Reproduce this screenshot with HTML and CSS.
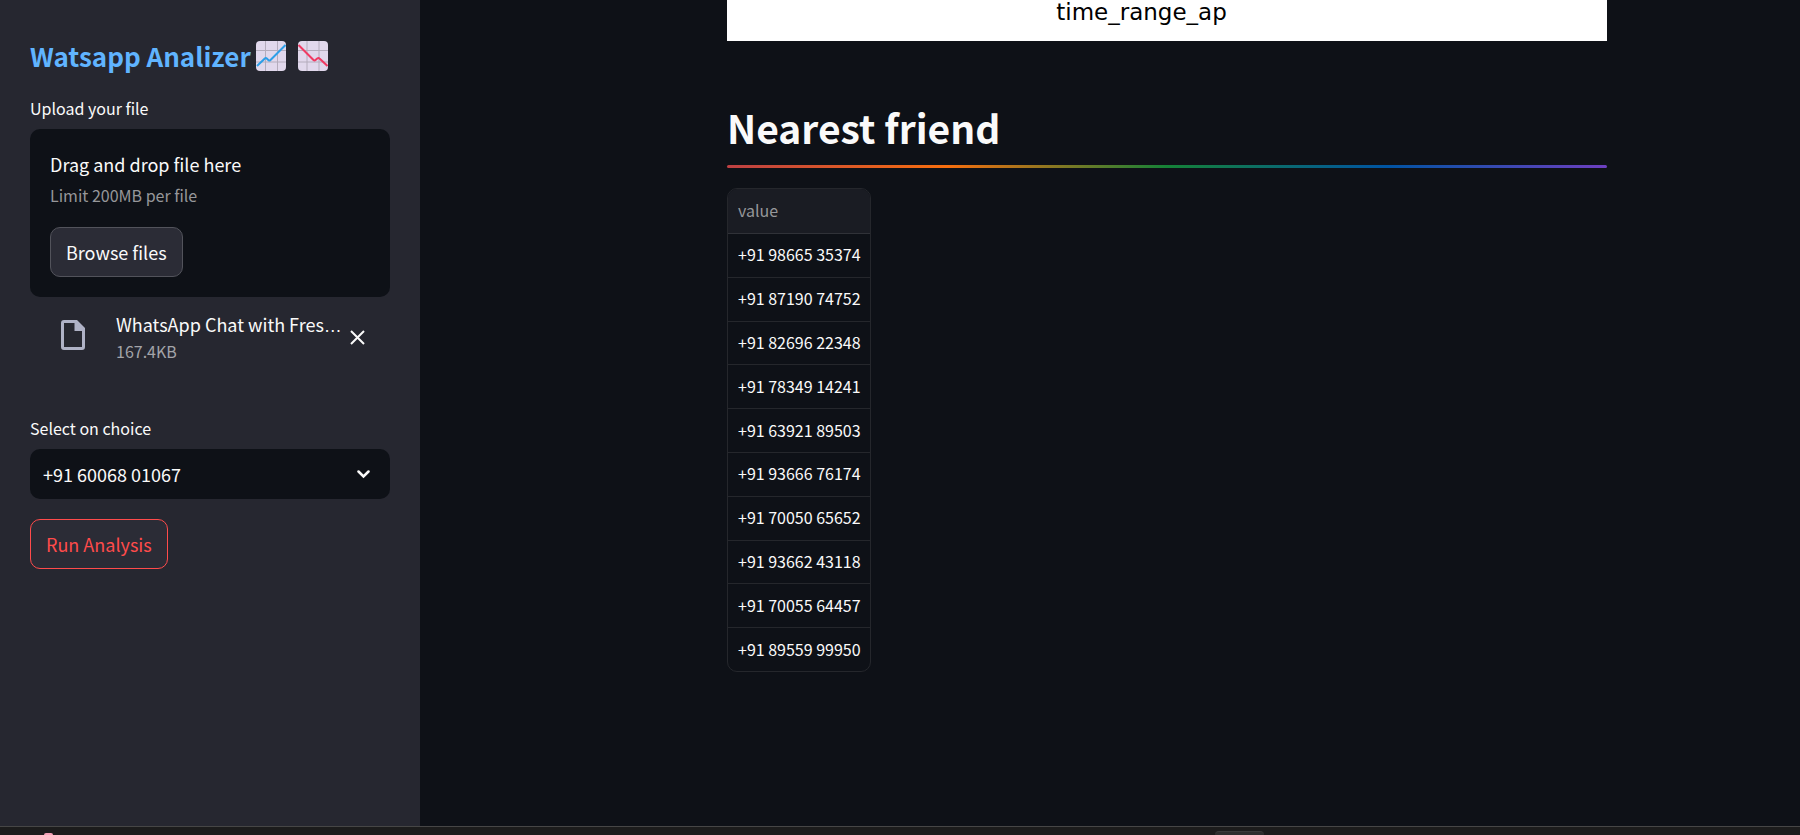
FILE: index.html
```html
<!DOCTYPE html>
<html lang="en">
<head>
<meta charset="utf-8">
<title>Watsapp Analizer</title>
<link rel="stylesheet" href="styles.css">
</head>
<body>
<div class="app">
  <aside class="sidebar">
    <h1 class="brand">
      <span>Watsapp Analizer</span>
      <svg class="emoji" viewBox="0 0 30 30" aria-hidden="true">
        <rect width="30" height="30" rx="4" fill="#e1d8ec"/>
        <path d="M9.5 0V30M21.5 0V30M0 9.5H30M0 21H30" stroke="#b4acbc" stroke-width="1" fill="none"/>
        <path d="M1 25L8.800 17.500Q9.800 16.500 10.800 17.500L12.500 19.300Q13.500 20 14.500 19L29.500 4" stroke="#2d9fe8" stroke-width="2" fill="none"/>
      </svg>
      <svg class="emoji emoji-down" viewBox="0 0 30 30" aria-hidden="true">
        <rect width="30" height="30" rx="4" fill="#e1d8ec"/>
        <path d="M9 0V30M21 0V30M0 9.500H30M0 21H30" stroke="#b4acbc" stroke-width="1" fill="none"/>
        <path d="M0.500 4L15.500 19Q16.500 20 17.500 19L19.200 17.500Q20.500 16.500 21.500 17.500L29.500 25" stroke="#f03a62" stroke-width="2" fill="none"/>
      </svg>
    </h1>

    <label class="label" for="browse">Upload your file</label>
    <section class="dropzone">
      <div class="drop-title">Drag and drop file here</div>
      <div class="drop-limit">Limit 200MB per file</div>
      <button class="button" id="browse" type="button">Browse files</button>
    </section>

    <div class="file">
      <svg class="file-icon" viewBox="0 0 24 30" aria-hidden="true">
        <path d="M3 0H16L24 8V27Q24 30 21 30H3Q0 30 0 27V3Q0 0 3 0ZM3 3V27H21V11H13.500V3Z" fill="#afb2c6" fill-rule="evenodd"/>
      </svg>
      <div class="file-text">
        <div class="file-name">WhatsApp Chat with Fres<span class="dots">…</span></div>
        <div class="file-size">167.4KB</div>
      </div>
      <button class="remove" type="button" aria-label="Remove file">
        <svg viewBox="0 0 15 15" width="15" height="15"><path d="M1 1L14 14M14 1L1 14" stroke="#fafafa" stroke-width="2" fill="none"/></svg>
      </button>
    </div>

    <label class="label" for="choice">Select on choice</label>
    <div class="select-wrap">
      <select class="select" id="choice"><option>+91 60068 01067</option></select>
      <svg class="chevron" viewBox="0 0 13 9" aria-hidden="true"><path d="M1.500 1.500L6.500 6.500L11.500 1.500" stroke="#fafafa" stroke-width="2.500" fill="none" stroke-linecap="round"/></svg>
    </div>
    <button class="button button-run" type="button">Run Analysis</button>
  </aside>

  <main class="main">
    <div class="figure">time_range_ap</div>
    <h2 class="heading">Nearest friend</h2>
    <div class="rainbow"></div>
    <table class="table">
      <thead><tr><th scope="col">value</th></tr></thead>
      <tbody>
        <tr><td>+91 98665 35374</td></tr>
        <tr><td>+91 87190 74752</td></tr>
        <tr><td>+91 82696 22348</td></tr>
        <tr><td>+91 78349 14241</td></tr>
        <tr><td>+91 63921 89503</td></tr>
        <tr><td>+91 93666 76174</td></tr>
        <tr><td>+91 70050 65652</td></tr>
        <tr><td>+91 93662 43118</td></tr>
        <tr><td>+91 70055 64457</td></tr>
        <tr><td>+91 89559 99950</td></tr>
      </tbody>
    </table>
  </main>
</div>
<footer class="taskbar">
  <span class="task-dot"></span>
  <span class="task-tab"></span>
</footer>
</body>
</html>
```
FILE: styles.css
```css
* { box-sizing: border-box; }

body {
  margin: 0;
  height: 100vh;
  display: flex;
  flex-direction: column;
  overflow: hidden;
  background: #0e1117;
  color: #fafafa;
  font-family: "Noto Sans CJK SC", sans-serif;
  font-size: 18px;
}

button, select { font: inherit; color: inherit; }

.app { flex: 1; min-height: 0; display: flex; }

.sidebar {
  width: 420px;
  flex-shrink: 0;
  padding: 38px 30px 0;
  background: #262730;
}

.brand {
  display: flex;
  align-items: center;
  margin: 0 0 22px;
  font-size: 26px;
  line-height: 36px;
  font-weight: 700;
  color: #60b4ff;
}
.emoji { width: 30px; height: 30px; margin-left: 5px; }
.emoji-down { margin-left: 12px; }

.label {
  display: block;
  margin-bottom: 9px;
  font-size: 16px;
  line-height: 24px;
}

.dropzone {
  padding: 20px;
  border-radius: 10px;
  background: #0e1117;
}
.drop-title { line-height: 30px; }
.drop-limit {
  margin-bottom: 16px;
  font-size: 16px;
  line-height: 32px;
  color: #96979a;
}

.button {
  display: block;
  height: 50px;
  padding: 0 15px 1px;
  border: 1px solid #52535b;
  border-radius: 10px;
  background: #2b2c36;
}
.button-run { border-color: #ff4b4b; color: #ff4b4b; }

.file {
  display: flex;
  align-items: center;
  margin: 13px 0 52px;
  padding: 0 25px 0 31px;
}
.file-icon { width: 24px; height: 30px; margin: 0 31px 4px 0; }
.file-text { flex: 1; white-space: nowrap; }
.file-name { line-height: 28px; }
.dots { font-family: "Liberation Sans", sans-serif; line-height: 1; }
.file-size { font-size: 16px; line-height: 26px; color: #a3a4a9; }
.remove {
  display: flex;
  padding: 0;
  border: 0;
  background: none;
}

.select-wrap { position: relative; margin-bottom: 20px; }
.select {
  display: block;
  width: 100%;
  height: 50px;
  padding: 0 44px 1px 13px;
  border: 0;
  border-radius: 10px;
  background: #0e1117;
  appearance: none;
}
.chevron {
  position: absolute;
  top: 21px;
  right: 20px;
  width: 13px;
  height: 9px;
  pointer-events: none;
}

.main {
  flex: 1;
  min-width: 0;
  padding: 0 193px 0 307px;
}

.figure {
  height: 41px;
  padding-right: 51px;
  background: #fff;
  color: #000;
  font-family: "DejaVu Sans", sans-serif;
  font-size: 23px;
  line-height: 24px;
  text-align: center;
}

.heading {
  margin: 61px 0 13px;
  font-size: 39px;
  line-height: 50px;
  font-weight: 700;
}

.rainbow {
  height: 3px;
  margin-bottom: 20px;
  border-radius: 3px;
  background: linear-gradient(to right, #bd4043, #f76e0e 25%, #158237 50%, #0054a3 75%, #6d3fc0);
}

.table {
  height: 484px;
  border: 1px solid #25272c;
  border-radius: 10px;
  border-spacing: 0;
  overflow: hidden;
  font-size: 16px;
  line-height: 22px;
}
.table th, .table td {
  padding: 9px 9px 11px 10px;
  border-bottom: 1px solid #25272c;
  text-align: left;
}
.table th {
  height: 45px;
  background: #1a1c23;
  color: #96979a;
  font-weight: 400;
}
.table thead th { border-bottom-color: #303238; }
.table tr:last-child td { border-bottom: 0; }

.taskbar {
  display: flex;
  align-items: flex-end;
  height: 9px;
  border-top: 1px solid #464646;
  background: #1c1c1c;
  overflow: hidden;
}
.task-dot {
  width: 9px;
  height: 2px;
  margin-left: 44px;
  border-radius: 4px 4px 0 0;
  background: #f5a3b8;
}
.task-tab {
  width: 49px;
  height: 4px;
  margin-left: 1162px;
  border-top: 1px solid #3a3a3a;
  border-radius: 4px 4px 0 0;
  background: #2d2d2d;
}
```
